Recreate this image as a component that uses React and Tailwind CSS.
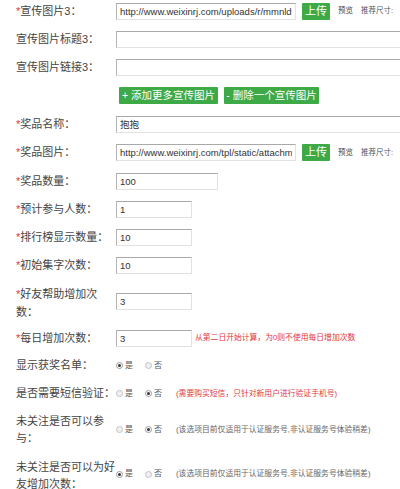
import { useState } from "react";

const font = { fontFamily: '"Liberation Sans", "Noto Sans CJK SC", sans-serif' };

function Star() {
  return <span className="text-[#e0393e]">*</span>;
}

function Label({ children, req }) {
  return (
    <div className="w-[100px] shrink-0 text-[11px] leading-[17px] text-[#444]">
      {req && <Star />}
      {children}
    </div>
  );
}

function Field({ value = "", w }) {
  return (
    <input
      type="text"
      readOnly
      value={value}
      className={`${w} shrink-0 h-[17px] px-[3px] text-[9.5px] text-[#333] bg-white border border-t-[#a9a9a9] border-l-[#b5b5b5] border-r-[#e2e2e2] border-b-[#e2e2e2] outline-none`}
      style={font}
    />
  );
}

function Upload() {
  return (
    <>
      <button className="ml-[6px] h-[17px] w-[28px] bg-[#3ea947] text-white text-[11px] leading-[17px] rounded-[1px]">
        上传
      </button>
      <span className="ml-[8px] text-[7.5px] text-[#444]">预览</span>
      <span className="ml-[8px] text-[7.5px] text-[#555] whitespace-nowrap">推荐尺寸:</span>
    </>
  );
}

function Radio({ checked, label }) {
  return (
    <span className="flex items-center w-[29px]">
      <span
        className={`w-[7px] h-[7px] rounded-full border flex items-center justify-center ${
          checked ? "border-[#9a9a9a] bg-white" : "border-[#c4c4c4] bg-[#f0f0f0]"
        }`}
      >
        {checked && <span className="w-[3px] h-[3px] rounded-full bg-[#333]" />}
      </span>
      <span className="ml-[2px] text-[8px] text-[#555]">{label}</span>
    </span>
  );
}

function Radios({ yes }) {
  return (
    <div className="flex items-center shrink-0">
      <Radio checked={yes} label="是" />
      <Radio checked={!yes} label="否" />
    </div>
  );
}

export default function App() {
  const [show] = useState(true);

  return (
    <div className="w-[400px] h-[489px] overflow-hidden bg-white pl-[16px]" style={font}>
      <div className="-mt-[3px]">
        <div className="flex items-center h-[28px]">
          <Label req>宣传图片3：</Label>
          <Field w="w-[180px]" value="http://www.weixinrj.com/uploads/r/mmnldt/b/2/8/a/5b" />
          <Upload />
        </div>
        <div className="flex items-center h-[28px]">
          <Label>宣传图片标题3：</Label>
          <Field w="w-[300px]" />
        </div>
        <div className="flex items-center h-[28px]">
          <Label>宣传图片链接3：</Label>
          <Field w="w-[300px]" />
        </div>
        <div className="flex items-center h-[29px] pl-[103px] gap-[6px]">
          <button className="w-[99px] h-[17px] bg-[#3ea947] text-white text-[10.5px] leading-[17px] rounded-[1px] whitespace-nowrap">
            + 添加更多宣传图片
          </button>
          <button className="w-[95px] h-[17px] bg-[#3ea947] text-white text-[10.5px] leading-[17px] rounded-[1px] whitespace-nowrap">
            - 删除一个宣传图片
          </button>
        </div>
        <div className="flex items-center h-[28px]">
          <Label req>奖品名称：</Label>
          <Field w="w-[300px]" value="抱抱" />
        </div>
        <div className="flex items-center h-[29px]">
          <Label req>奖品图片：</Label>
          <Field w="w-[180px]" value="http://www.weixinrj.com/tpl/static/attachment/focus/default" />
          <Upload />
        </div>
        <div className="flex items-center h-[28px]">
          <Label req>奖品数量：</Label>
          <Field w="w-[102px]" value="100" />
        </div>
        <div className="flex items-center h-[28px]">
          <Label req>预计参与人数：</Label>
          <Field w="w-[76px]" value="1" />
        </div>
        <div className="flex items-center h-[28px]">
          <Label req>排行榜显示数量：</Label>
          <Field w="w-[76px]" value="10" />
        </div>
        <div className="flex items-center h-[28px]">
          <Label req>初始集字次数：</Label>
          <Field w="w-[76px]" value="10" />
        </div>
        <div className="flex items-center h-[45px]">
          <div className="w-[100px] shrink-0 text-[11px] leading-[18px] text-[#444] pt-[2px] before:content-['*'] before:text-[#e0393e]">
            好友帮助增加次数：
          </div>
          <Field w="w-[76px]" value="3" />
        </div>
        <div className="flex items-center h-[28px]">
          <Label req>每日增加次数：</Label>
          <Field w="w-[76px]" value="3" />
          <span className="ml-[3px] text-[7.8px] text-[#e0393e] whitespace-nowrap">
            从第二日开始计算，为0则不使用每日增加次数
          </span>
        </div>
        <div className="flex items-center h-[27px]">
          <Label>显示获奖名单：</Label>
          {show && <Radios yes />}
        </div>
        <div className="flex items-center h-[29px]">
          <Label>是否需要短信验证：</Label>
          <Radios yes={false} />
          <span className="ml-[2px] text-[7.8px] text-[#e0393e] whitespace-nowrap">
            (需要购买短信，只针对新用户进行验证手机号)
          </span>
        </div>
        <div className="flex items-center h-[43px]">
          <div className="w-[100px] shrink-0 text-[11px] leading-[17px] text-[#444]">
            未关注是否可以参与：
          </div>
          <Radios yes={false} />
          <span className="ml-[2px] text-[7.8px] text-[#666] whitespace-nowrap">
            (该选项目前仅适用于认证服务号,非认证服务号体验稍差)
          </span>
        </div>
        <div className="flex items-start pt-[8px]">
          <div className="w-[100px] shrink-0 text-[11px] leading-[17px] text-[#444]">
            未关注是否可以为好友增加次数：
          </div>
          <div className="flex items-center mt-[9px]">
            <Radios yes />
            <span className="ml-[2px] text-[7.8px] text-[#666] whitespace-nowrap">
              (该选项目前仅适用于认证服务号,非认证服务号体验稍差)
            </span>
          </div>
        </div>
      </div>
    </div>
  );
}
